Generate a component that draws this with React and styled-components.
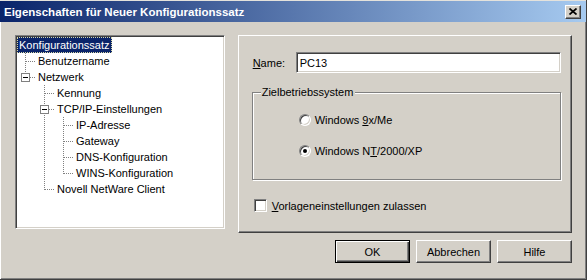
import React from 'react';
import styled, { createGlobalStyle } from 'styled-components';

const FACE = '#d4d0c8';
const SHADOW = '#808080';
const DARK = '#404040';

const Global = createGlobalStyle`
  body {
    margin: 0;
    background: ${FACE};
    font-family: "Liberation Sans", Arial, sans-serif;
    font-size: 11px;
    color: #000;
  }
`;

const treeItems = [
  { label: 'Konfigurationssatz', guides: [], selected: true },
  { label: 'Benutzername', guides: ['tee'] },
  { label: 'Netzwerk', guides: ['corner'], box: true },
  { label: 'Kennung', guides: ['blank', 'tee'] },
  { label: 'TCP/IP-Einstellungen', guides: ['blank', 'tee'], box: true },
  { label: 'IP-Adresse', guides: ['blank', 'pipe', 'tee'] },
  { label: 'Gateway', guides: ['blank', 'pipe', 'tee'] },
  { label: 'DNS-Konfiguration', guides: ['blank', 'pipe', 'tee'] },
  { label: 'WINS-Konfiguration', guides: ['blank', 'pipe', 'corner'] },
  { label: 'Novell NetWare Client', guides: ['blank', 'corner'] },
];

export default function App() {
  return (
    <>
      <Global />
      <Window>
        <TitleBar>
          <Caption>Eigenschaften für Neuer Konfigurationssatz</Caption>
          <CloseButton>
            <svg width="8" height="7" viewBox="0 0 8 7">
              <path d="M0.5 0.5 L7.5 6.5 M7.5 0.5 L0.5 6.5" stroke="#000" strokeWidth="1.7" />
            </svg>
          </CloseButton>
        </TitleBar>

        <Body>
          <Main>
            <Tree>
              {treeItems.map((item) => (
                <TreeRow key={item.label}>
                  {item.guides.map((kind, i) => (
                    <Guide
                      key={i}
                      kind={kind}
                      box={item.box && i === item.guides.length - 1}
                    />
                  ))}
                  <TreeLabel $selected={item.selected}>{item.label}</TreeLabel>
                </TreeRow>
              ))}
            </Tree>

            <Page>
              <NameRow>
                <FieldLabel>
                  <u>N</u>ame:
                </FieldLabel>
                <TextInput readOnly value="PC13" />
              </NameRow>

              <GroupBox>
                <Legend>Zielbetriebssystem</Legend>
                <RadioList>
                  <OptionRow>
                    <Radio />
                    <span>
                      Windows <u>9</u>x/Me
                    </span>
                  </OptionRow>
                  <OptionRow>
                    <Radio>
                      <Dot />
                    </Radio>
                    <span>
                      Windows N<u>T</u>/2000/XP
                    </span>
                  </OptionRow>
                </RadioList>
              </GroupBox>

              <CheckRow>
                <CheckBox />
                <span>
                  <u>V</u>orlageneinstellungen zulassen
                </span>
              </CheckRow>
            </Page>
          </Main>

          <ButtonRow>
            <Button $default>OK</Button>
            <Button>Abbrechen</Button>
            <Button>Hilfe</Button>
          </ButtonRow>
        </Body>
      </Window>
    </>
  );
}

function Guide({ kind, box }) {
  const dots = { stroke: SHADOW, strokeWidth: 1, strokeDasharray: '1 1' };
  return (
    <GuideCell width="19" height="16" viewBox="0 0 19 16" shapeRendering="crispEdges">
      {(kind === 'tee' || kind === 'pipe') && <line x1="8.5" y1="0" x2="8.5" y2="16" {...dots} />}
      {kind === 'corner' && <line x1="8.5" y1="0" x2="8.5" y2="9" {...dots} />}
      {(kind === 'tee' || kind === 'corner') && <line x1="9" y1="8.5" x2="19" y2="8.5" {...dots} />}
      {box && (
        <>
          <rect x="4.5" y="4.5" width="8" height="8" fill="#fff" stroke={SHADOW} />
          <line x1="6" y1="8.5" x2="11" y2="8.5" stroke="#000" />
        </>
      )}
    </GuideCell>
  );
}

const Window = styled.div`
  width: 587px;
  height: 280px;
  box-sizing: border-box;
  display: flex;
  flex-direction: column;
  background: ${FACE};
  border-right: 1px solid ${DARK};
  border-bottom: 1px solid ${DARK};
  box-shadow: inset -1px -1px ${SHADOW};
`;

const TitleBar = styled.div`
  height: 22px;
  box-sizing: border-box;
  border-top: 1px solid #e4e2dc;
  display: flex;
  align-items: center;
  padding: 0 5px 0 4px;
  background: linear-gradient(to right, #0a246a, #a6caf0);
`;

const Caption = styled.span`
  color: #fff;
  font-weight: bold;
  font-size: 11.5px;
  white-space: nowrap;
`;

const CloseButton = styled.div`
  margin-left: auto;
  width: 16px;
  height: 14px;
  box-sizing: border-box;
  display: flex;
  align-items: center;
  justify-content: center;
  background: ${FACE};
  border: 1px solid;
  border-color: #fff ${DARK} ${DARK} #fff;
  box-shadow: inset -1px -1px ${SHADOW};
`;

const Body = styled.div`
  flex: 1;
  display: flex;
  flex-direction: column;
  padding: 13px 14px 0 15px;
  box-shadow: inset 1px 0 #fff;
`;

const Main = styled.div`
  display: flex;
  align-items: flex-start;
  gap: 13px;
`;

const Tree = styled.div`
  width: 212px;
  height: 194px;
  box-sizing: border-box;
  padding: 1px;
  background: #fff;
  border: 1px solid;
  border-color: ${SHADOW} #fff #fff ${SHADOW};
  box-shadow: inset 1px 1px ${DARK}, inset -1px -1px ${FACE};
  display: flex;
  flex-direction: column;
`;

const TreeRow = styled.div`
  display: flex;
  align-items: center;
  height: 16px;
`;

const GuideCell = styled.svg`
  flex: none;
  display: block;
`;

const TreeLabel = styled.span`
  height: 16px;
  box-sizing: border-box;
  line-height: 14px;
  padding: 0 1px;
  border: 1px dotted ${(p) => (p.$selected ? '#d8d8a8' : 'transparent')};
  background: ${(p) => (p.$selected ? '#0a246a' : 'transparent')};
  color: ${(p) => (p.$selected ? '#fff' : '#000')};
  white-space: nowrap;
`;

const Page = styled.div`
  width: 338px;
  height: 198px;
  box-sizing: border-box;
  padding: 16px 0 0 13px;
  border: 1px solid;
  border-color: #fff ${DARK} ${DARK} #fff;
  box-shadow: inset -1px -1px ${SHADOW};
  display: flex;
  flex-direction: column;
`;

const NameRow = styled.div`
  display: flex;
  align-items: center;
  height: 21px;
`;

const FieldLabel = styled.span`
  width: 44px;
  padding-left: 1px;
  box-sizing: border-box;
`;

const TextInput = styled.input`
  width: 265px;
  height: 21px;
  box-sizing: border-box;
  margin: 0;
  padding: 0 2px 0 3px;
  font: 11px "Liberation Sans", Arial, sans-serif;
  color: #000;
  background: #fff;
  border: 1px solid;
  border-color: ${SHADOW} #fff #fff ${SHADOW};
  box-shadow: inset 1px 1px ${DARK}, inset -1px -1px ${FACE};
  outline: none;
`;

const GroupBox = styled.div`
  width: 309px;
  box-sizing: border-box;
  margin-top: 19px;
  padding: 0 0 20px 46px;
  border: 1px solid ${SHADOW};
  box-shadow: inset 1px 1px #fff, 1px 1px #fff;
`;

const Legend = styled.div`
  width: fit-content;
  height: 13px;
  line-height: 13px;
  margin: -7px 0 0 -38px;
  padding: 0 2px 0 1px;
  background: ${FACE};
`;

const RadioList = styled.div`
  display: flex;
  flex-direction: column;
  gap: 15px;
  padding-top: 13px;
`;

const OptionRow = styled.div`
  display: flex;
  align-items: center;
  gap: 4px;
  height: 16px;
`;

const Radio = styled.span`
  width: 12px;
  height: 12px;
  box-sizing: border-box;
  border-radius: 50%;
  border: 1px solid;
  border-color: ${SHADOW} #fff #fff ${SHADOW};
  box-shadow: inset 1px 1px ${DARK}, inset -1px -1px ${FACE};
  background: #fff;
  display: flex;
  align-items: center;
  justify-content: center;
`;

const Dot = styled.span`
  width: 4px;
  height: 4px;
  border-radius: 50%;
  background: #000;
`;

const CheckRow = styled.div`
  display: flex;
  align-items: center;
  gap: 5px;
  height: 15px;
  margin: 18px 0 0 2px;
`;

const CheckBox = styled.span`
  width: 13px;
  height: 13px;
  box-sizing: border-box;
  background: #fff;
  border: 1px solid;
  border-color: ${SHADOW} #fff #fff ${SHADOW};
  box-shadow: inset 1px 1px ${DARK}, inset -1px -1px ${FACE};
`;

const ButtonRow = styled.div`
  display: flex;
  justify-content: flex-end;
  gap: 6px;
  margin-top: 7px;
`;

const Button = styled.div`
  width: 75px;
  height: 23px;
  box-sizing: border-box;
  display: flex;
  align-items: center;
  justify-content: center;
  background: ${FACE};
  border: 1px solid;
  border-color: ${(p) => (p.$default ? '#000' : `#fff ${DARK} ${DARK} #fff`)};
  box-shadow: ${(p) =>
    p.$default
      ? `inset 1px 1px #fff, inset -1px -1px ${DARK}, inset -2px -2px ${SHADOW}`
      : `inset -1px -1px ${SHADOW}`};
`;
